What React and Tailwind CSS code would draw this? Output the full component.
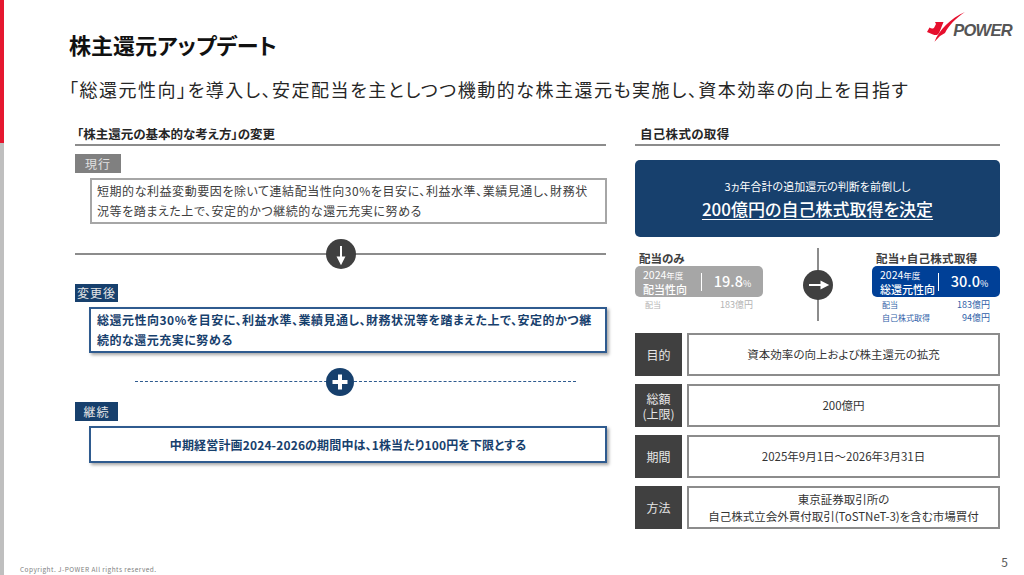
const NAVY = "#17406d";

function SectionHead({ children, className = "" }) {
  return (
    <div className={`flex h-[22px] items-center border-b-2 border-[#8c8c8c] text-[12.5px] font-bold leading-none text-[#262626] ${className}`}>
      {children}
    </div>
  );
}

function Tag({ children, className = "" }) {
  return (
    <div className={`flex items-center justify-center text-[12px] leading-none tracking-[1px] ${className}`}>
      {children}
    </div>
  );
}

function ArrowCircle({ dir }) {
  return (
    <svg width="30" height="30" viewBox="0 0 30 30" className="relative block">
      <circle cx="15" cy="15" r="15" fill="#404040" />
      {dir === "down" ? (
        <path d="M15 7V19.5M12.2 18.5L15 24L17.8 18.5Z" stroke="#fff" strokeWidth="2" fill="#fff" strokeLinejoin="miter" />
      ) : (
        <path d="M6 15H19.5M18.5 12.2L24 15L18.5 17.8Z" stroke="#fff" strokeWidth="2" fill="#fff" strokeLinejoin="miter" />
      )}
    </svg>
  );
}

function Pill({ bg, year, label, value }) {
  return (
    <div className={`flex h-[31px] items-center rounded-[5px] pl-[8px] text-white ${bg}`}>
      <div className="w-[58px] shrink-0">
        <div className="text-[10.5px] leading-[14px] whitespace-nowrap">{year}<span className="text-[8.5px]">年度</span></div>
        <div className="text-[11px] font-medium leading-[14px] whitespace-nowrap">{label}</div>
      </div>
      <div className="h-[18px] w-px bg-white" />
      <div className="flex-1 text-center text-[14.5px] font-medium leading-none">
        {value}<span className="text-[9px] font-normal">%</span>
      </div>
    </div>
  );
}

function InfoRow({ label, children }) {
  return (
    <div className="flex h-[43px] gap-[5px]">
      <div className="flex w-[47px] shrink-0 items-center justify-center bg-[#404040] text-center text-[12px] leading-[15px] text-[#e6e6e6]">
        {label}
      </div>
      <div className="flex flex-1 items-center justify-center border-2 border-[#8c8c8c] bg-white text-center text-[11.5px] leading-[17px] text-[#333333]">
        {children}
      </div>
    </div>
  );
}

function Logo() {
  return (
    <div className="flex items-center">
      <svg width="44" height="34" viewBox="0 0 44 34" className="block shrink-0">
        <path d="M10 14H18.5L14.5 24C13 27.5 10.5 27.5 8 26.5L2 24L4.5 19.5C6.5 21 8.5 21 9.5 19L11 16Z" fill="#e60f2d" />
        <path d="M9.5 33.7C14 22 26 10 40 4C31 10 24 17 20 25L15 28Z" fill="#e60f2d" />
      </svg>
      <span className="-ml-[16px] mt-[10px] text-[16.5px] font-bold italic leading-none tracking-[-0.7px] text-[#555555] [font-family:'Liberation_Sans',sans-serif]">
        POWER
      </span>
    </div>
  );
}

export default function App() {
  return (
    <div className="flex h-[575px] w-[1024px] overflow-hidden bg-white [font-family:'Noto_Sans_CJK_JP','Noto_Sans',sans-serif] [font-feature-settings:'palt']">
      <div className="flex h-full w-[4px] shrink-0 flex-col">
        <div className="h-[143px] bg-[#e5172f]" />
        <div className="flex-1 bg-[#bfbfbf]" />
      </div>

      <div className="flex h-full min-w-0 flex-1 flex-col">
        <header className="flex h-[70px] justify-between pl-[65px] pr-[12px]">
          <h1 className="pt-[29px] text-[22px] font-bold leading-[30px] text-[#111111]">株主還元アップデート</h1>
          <div className="pt-[8px]"><Logo /></div>
        </header>

        <p className="h-[54px] pl-[65px] pt-[6px] text-[18px] leading-[26px] tracking-[1.52px] whitespace-nowrap text-[#262626]">
          「総還元性向」を導入し、安定配当を主としつつ機動的な株主還元も実施し、資本効率の向上を目指す
        </p>

        <main className="flex gap-[29px] pl-[71px]">
          <section className="w-[531px]">
            <SectionHead className="pl-[2px]">「株主還元の基本的な考え方」の変更</SectionHead>

            <Tag className="mt-[8px] h-[19px] w-[46px] bg-[#808080] text-[#e0e0e0]">現行</Tag>
            <div className="ml-[15px] mt-[5px] h-[46px] w-[517px] border-2 border-[#a6a6a6] py-[1px] pl-[5px] text-[12px] leading-[20px] tracking-[0.55px] whitespace-nowrap text-[#404040]">
              短期的な利益変動要因を除いて連結配当性向30%を目安に、利益水準、業績見通し、財務状
              <br />
              況等を踏まえた上で、安定的かつ継続的な還元充実に努める
            </div>

            <div className="relative mt-[15px] flex h-[30px] items-center justify-center">
              <div className="absolute inset-x-0 top-[14px] h-[2px] bg-[#8c8c8c]" />
              <ArrowCircle dir="down" />
            </div>

            <Tag className="mt-[15px] h-[18px] w-[43px] bg-[#17406d] text-[#e6e6e6]">変更後</Tag>
            <div className="ml-[14px] mt-[5px] h-[46px] w-[518px] border-2 border-[#2f5b8f] bg-white py-[1px] pl-[6px] text-[12px] font-bold leading-[20px] tracking-[0.5px] whitespace-nowrap text-[#17406d] shadow-[2px_2px_3px_rgba(0,0,0,0.35)]">
              総還元性向30%を目安に、利益水準、業績見通し、財務状況等を踏まえた上で、安定的かつ継
              <br />
              続的な還元充実に努める
            </div>

            <div className="relative mt-[15px] ml-[60px] flex h-[28px] w-[441px] items-center">
              <div className="absolute inset-x-0 top-[13px] border-t border-dashed border-[#2f5b8f]" />
              <svg width="28" height="28" viewBox="0 0 28 28" className="relative ml-[191px] block">
                <circle cx="14" cy="14" r="14" fill={NAVY} />
                <path d="M14 6.5V21.5M6.5 14H21.5" stroke="#fff" strokeWidth="4" />
              </svg>
            </div>

            <Tag className="mt-[6px] h-[19px] w-[43px] bg-[#17406d] text-[#e6e6e6]">継続</Tag>
            <div className="ml-[14px] mt-[5px] flex h-[37px] w-[518px] items-center justify-center border-2 border-[#2f5b8f] bg-white text-[12px] font-bold tracking-[0.15px] text-[#17406d] shadow-[2px_2px_3px_rgba(0,0,0,0.35)]">
              中期経営計画2024-2026の期間中は、1株当たり100円を下限とする
            </div>
          </section>

          <section className="w-[365px]">
            <SectionHead className="pl-[5px] tracking-[0.3px]">自己株式の取得</SectionHead>

            <div className="mt-[14px] flex h-[77px] flex-col items-center justify-center rounded-[5px] bg-[#17406d] text-white">
              <div className="mt-[1px] text-[11px] leading-[20px]">3ヵ年合計の追加還元の判断を前倒しし</div>
              <div className="text-[17px] font-medium leading-[26px] underline decoration-1 underline-offset-[3px]">200億円の自己株式取得を決定</div>
            </div>

            <div className="mt-[11px] flex h-[73px] items-start">
              <div className="w-[128px] pt-[2px]">
                <div className="pl-[4px] text-[11.5px] font-bold leading-[16px] text-[#404040]">配当のみ</div>
                <Pill bg="bg-[#a6a6a6]" year="2024" label="配当性向" value="19.8" />
                <div className="mt-[1px] flex justify-between pl-[10px] pr-[10px] text-[8px] leading-[13px] text-[#b3b3b3]">
                  <span>配当</span><span className="text-[9px]">183億円</span>
                </div>
              </div>

              <div className="relative flex h-[73px] flex-1 items-center justify-center">
                <div className="absolute bottom-0 left-1/2 top-0 w-[2px] -translate-x-[1px] bg-[#8c8c8c]" />
                <ArrowCircle dir="right" />
              </div>

              <div className="w-[128px] pt-[2px]">
                <div className="pl-[4px] text-[11.5px] font-bold leading-[16px] tracking-[0.3px] whitespace-nowrap text-[#404040]">配当+自己株式取得</div>
                <Pill bg="bg-[#004097]" year="2024" label="総還元性向" value="30.0" />
                <div className="mt-[1px] pl-[10px] pr-[10px] text-[#2f5fa8]">
                  <div className="flex justify-between text-[8px] leading-[13px]">
                    <span>配当</span><span className="text-[9px]">183億円</span>
                  </div>
                  <div className="flex justify-between text-[8px] leading-[13px]">
                    <span>自己株式取得</span><span className="text-[9px]">94億円</span>
                  </div>
                </div>
              </div>
            </div>

            <div className="mt-[12px] flex flex-col gap-[8px]">
              <InfoRow label="目的">資本効率の向上および株主還元の拡充</InfoRow>
              <InfoRow label={<>総額<br />(上限)</>}>200億円</InfoRow>
              <InfoRow label="期間">2025年9月1日～2026年3月31日</InfoRow>
              <InfoRow label="方法">
                <div>東京証券取引所の<br />自己株式立会外買付取引(ToSTNeT-3)を含む市場買付</div>
              </InfoRow>
            </div>
          </section>
        </main>

        <footer className="mt-auto flex h-[28px] items-end justify-between pb-[1px] pl-[16px] pr-[16px]">
          <span className="text-[6.5px] leading-[10px] tracking-[0.45px] text-[#808080]">Copyright. J-POWER All rights reserved.</span>
          <span className="mb-[5px] text-[12px] leading-[14px] text-[#595959]">5</span>
        </footer>
      </div>
    </div>
  );
}
